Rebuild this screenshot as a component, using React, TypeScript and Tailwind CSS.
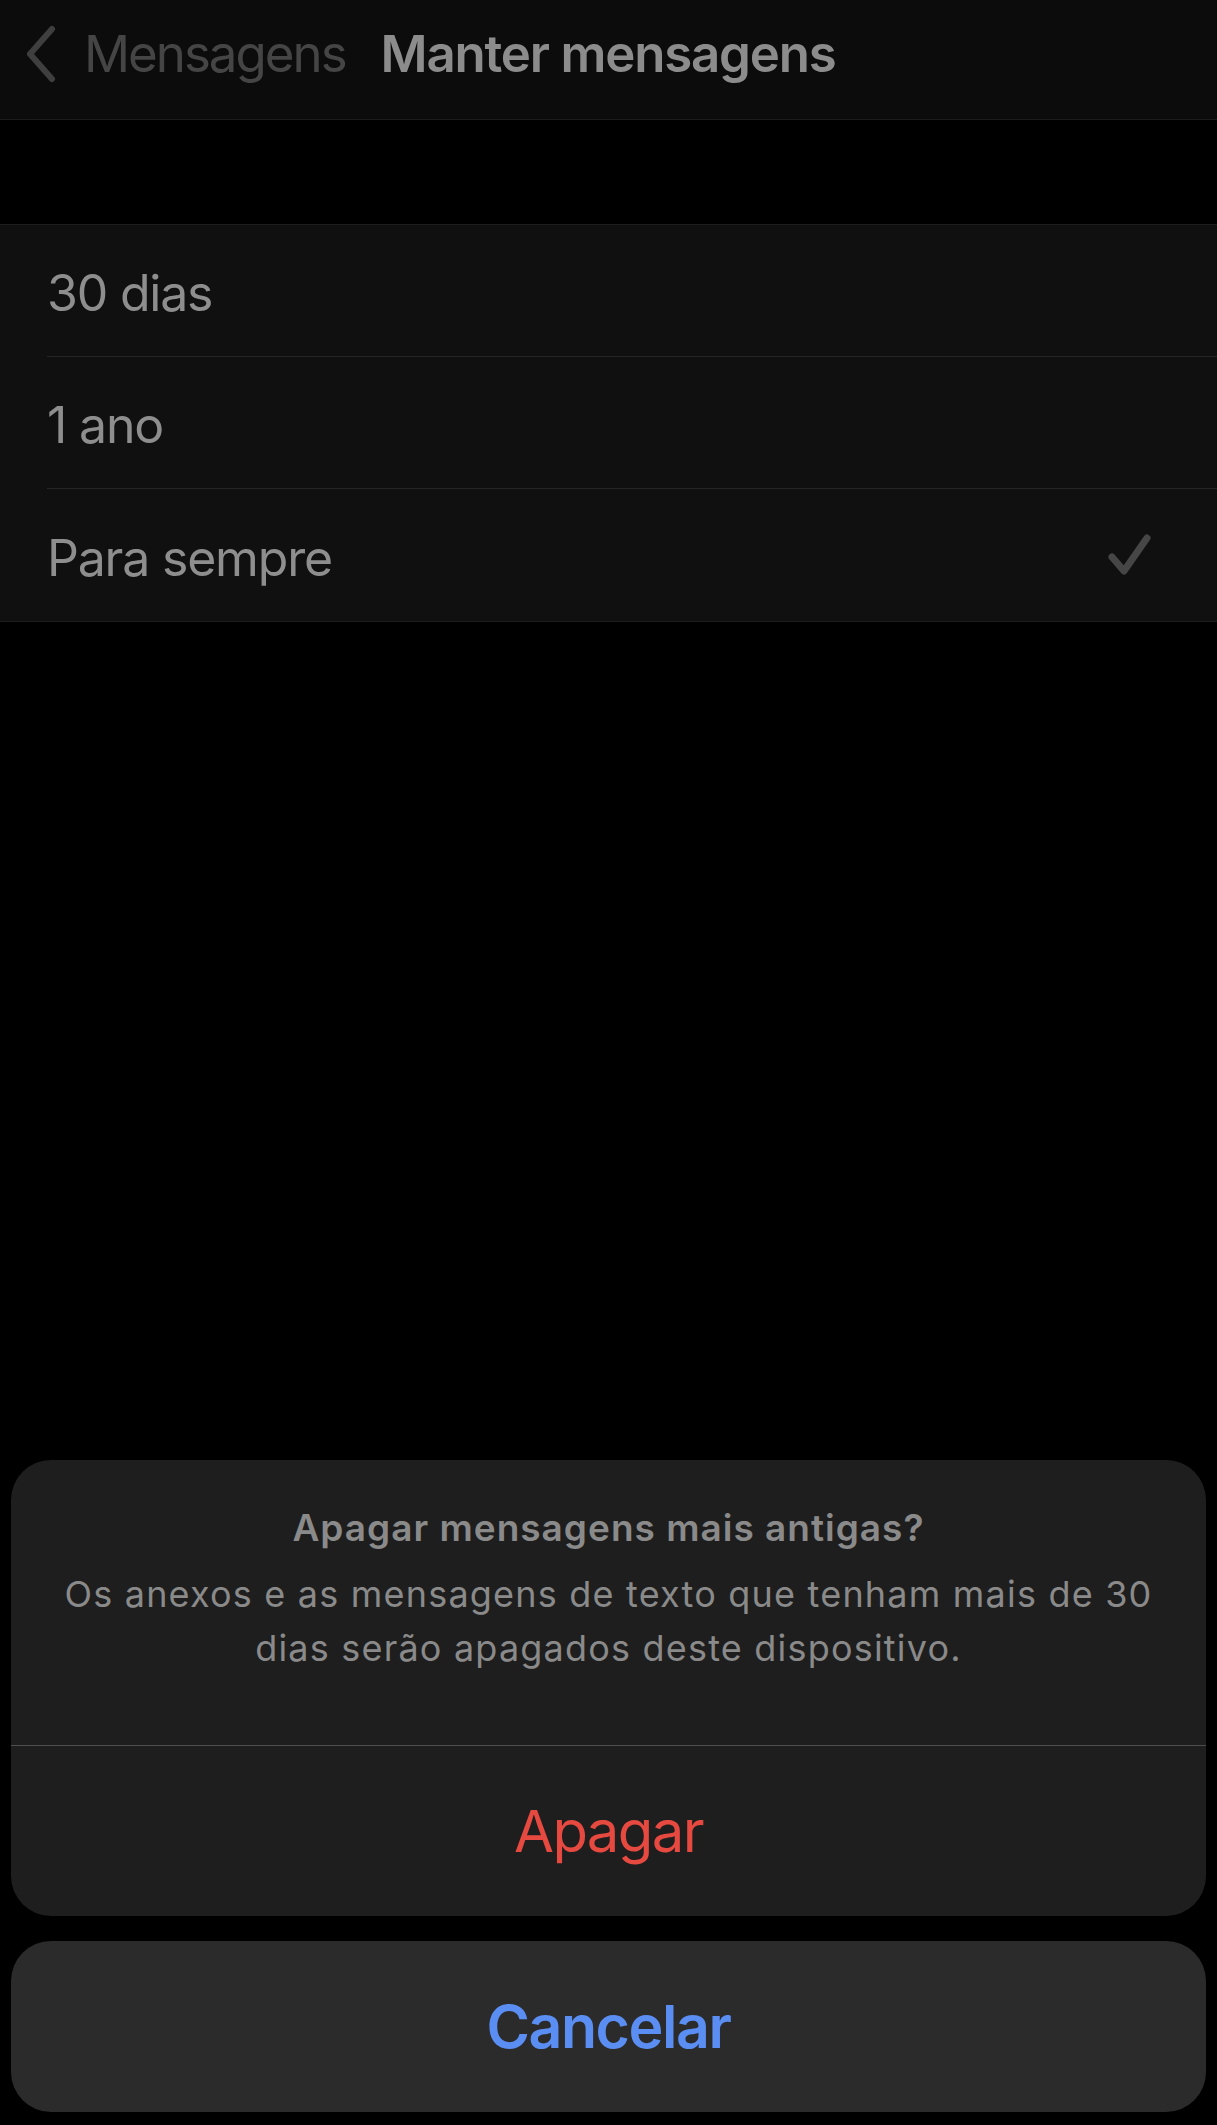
export default function App() {
    const options = [
        { label: '30 dias', checked: false },
        { label: '1 ano', checked: false },
        { label: 'Para sempre', checked: true },
    ];

    return (
        <div
            className="h-[2125px] w-full bg-black flex flex-col overflow-hidden"
            style={{ fontFamily: 'Inter, "Noto Sans", sans-serif' }}
        >
            {/* Navigation bar (dimmed behind the sheet) */}
            <div className="h-[120px] shrink-0 bg-[#0c0c0c] border-b border-[#1c1c1c] flex items-center pb-3 pl-[24px]">
                <svg width="34" height="58" viewBox="0 0 34 58" className="shrink-0">
                    <path
                        d="M28 4 L6 29 L28 54"
                        fill="none"
                        stroke="#3f3f3f"
                        strokeWidth="6"
                        strokeLinecap="round"
                        strokeLinejoin="round"
                    />
                </svg>
                <span className="ml-[26px] text-[51px] leading-[1.21] text-[#454545] tracking-[-2px]">Mensagens</span>
                <span className="ml-[35px] text-[51px] leading-[1.21] font-semibold text-[#8c8c8c] tracking-[-1.2px]">
                    Manter mensagens
                </span>
            </div>

            {/* Options list */}
            <div className="mt-[104px] shrink-0 bg-[#101010] border-t border-b border-[#1e1e1e]">
                {options.map((opt, i) => (
                    <div key={opt.label} className="pl-[47px]">
                        <div
                            className={
                                'h-[132px] flex items-center pt-[6px] pr-[64px] ' +
                                (i < options.length - 1 ? 'border-b border-[#252525]' : '')
                            }
                        >
                            <span className="flex-1 text-[50px] leading-[1.21] text-[#8e8e8e] tracking-[-1.2px]">{opt.label}</span>
                            {opt.checked && (
                                <svg width="46" height="46" viewBox="0 0 46 46" className="-mt-[6px]">
                                    <path
                                        d="M5 25 L17 39 L40 6"
                                        fill="none"
                                        stroke="#464646"
                                        strokeWidth="7"
                                        strokeLinecap="round"
                                        strokeLinejoin="round"
                                    />
                                </svg>
                            )}
                        </div>
                    </div>
                ))}
            </div>

            <div className="flex-1" />

            {/* Action sheet */}
            <div className="shrink-0 px-[11px] pb-[13px] flex flex-col gap-[25px]">
                <div className="rounded-[40px] bg-[#1e1e1e] overflow-hidden">
                    <div className="pt-[44px] pb-[70px] px-[40px] text-center">
                        <div className="text-[37px] leading-[48px] font-semibold text-[#8a8a8a] tracking-[1px]">
                            Apagar mensagens mais antigas?
                        </div>
                        <div className="mt-[15px] text-[36px] leading-[54px] text-[#8a8a8a] tracking-[1.2px]">
                            Os anexos e as mensagens de texto que tenham mais de 30 dias serão apagados deste dispositivo.
                        </div>
                    </div>
                    <div className="h-px bg-[#4e4e4e]" />
                    <div className="h-[170px] flex items-center justify-center">
                        <span className="text-[58px] leading-[1.21] text-[#e5493f] tracking-[-1.6px]">Apagar</span>
                    </div>
                </div>
                <div className="h-[171px] rounded-[40px] bg-[#2b2b2b] flex items-center justify-center">
                    <span className="text-[59px] leading-[1.21] font-semibold text-[#5b8ef2] tracking-[-1.4px]">Cancelar</span>
                </div>
            </div>
        </div>
    );
}
